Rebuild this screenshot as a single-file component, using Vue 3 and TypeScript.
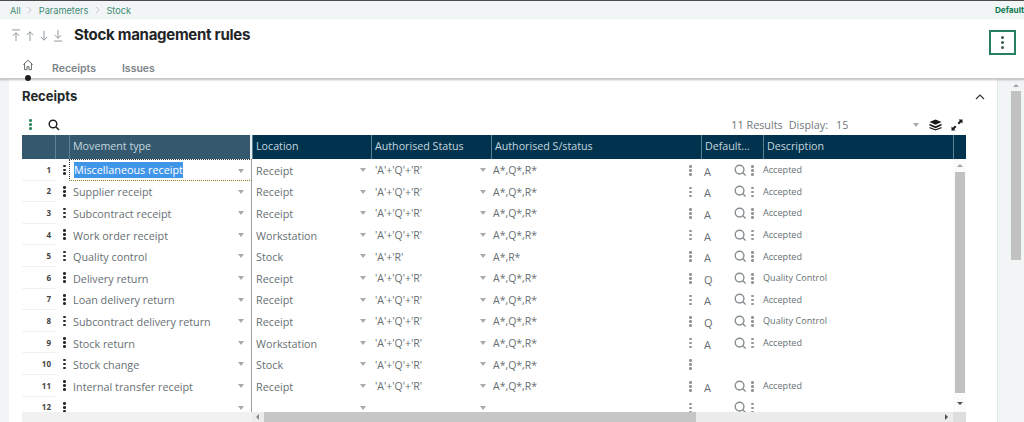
<script setup lang="ts">
interface Row {
  type: string;
  location: string;
  status: string;
  sub: string;
  def: string;
  desc: string;
}

const rows: Row[] = [
  { type: 'Miscellaneous receipt', location: 'Receipt', status: "'A'+'Q'+'R'", sub: 'A*,Q*,R*', def: 'A', desc: 'Accepted' },
  { type: 'Supplier receipt', location: 'Receipt', status: "'A'+'Q'+'R'", sub: 'A*,Q*,R*', def: 'A', desc: 'Accepted' },
  { type: 'Subcontract receipt', location: 'Receipt', status: "'A'+'Q'+'R'", sub: 'A*,Q*,R*', def: 'A', desc: 'Accepted' },
  { type: 'Work order receipt', location: 'Workstation', status: "'A'+'Q'+'R'", sub: 'A*,Q*,R*', def: 'A', desc: 'Accepted' },
  { type: 'Quality control', location: 'Stock', status: "'A'+'R'", sub: 'A*,R*', def: 'A', desc: 'Accepted' },
  { type: 'Delivery return', location: 'Receipt', status: "'A'+'Q'+'R'", sub: 'A*,Q*,R*', def: 'Q', desc: 'Quality Control' },
  { type: 'Loan delivery return', location: 'Receipt', status: "'A'+'Q'+'R'", sub: 'A*,Q*,R*', def: 'A', desc: 'Accepted' },
  { type: 'Subcontract delivery return', location: 'Receipt', status: "'A'+'Q'+'R'", sub: 'A*,Q*,R*', def: 'Q', desc: 'Quality Control' },
  { type: 'Stock return', location: 'Workstation', status: "'A'+'Q'+'R'", sub: 'A*,Q*,R*', def: 'A', desc: 'Accepted' },
  { type: 'Stock change', location: 'Stock', status: "'A'+'Q'+'R'", sub: 'A*,Q*,R*', def: '', desc: '' },
  { type: 'Internal transfer receipt', location: 'Receipt', status: "'A'+'Q'+'R'", sub: 'A*,Q*,R*', def: 'A', desc: 'Accepted' },
  { type: '', location: '', status: '', sub: '', def: '', desc: '' },
];
</script>

<template>
  <div class="page">
    <div class="crumbs">
      <span>All</span>
      <svg class="chev" viewBox="0 0 6 10"><path d="M1 1l4 4-4 4" /></svg>
      <span>Parameters</span>
      <svg class="chev" viewBox="0 0 6 10"><path d="M1 1l4 4-4 4" /></svg>
      <span>Stock</span>
      <b class="folder">Default</b>
    </div>

    <header class="head">
      <div class="title-row">
        <div class="nav-arrows">
          <svg viewBox="0 0 12 14"><path d="M1.5 1h9M6 13V4M2.5 7.5L6 4l3.5 3.5" /></svg>
          <svg viewBox="0 0 12 14"><path d="M6 13V3M2.5 6.5L6 3l3.5 3.5" /></svg>
          <svg viewBox="0 0 12 14"><path d="M6 2v10M2.5 8.5L6 12l3.5-3.5" /></svg>
          <svg viewBox="0 0 12 14"><path d="M1.5 13h9M6 1v9M2.5 6.5L6 10l3.5-3.5" /></svg>
        </div>
        <h1>Stock management rules</h1>
        <button class="more"><i></i><i></i><i></i></button>
      </div>
      <nav class="tabs">
        <span class="home">
          <svg viewBox="0 0 14 14"><path d="M1.5 6.5L7 1.5l5.5 5M3 5.5V12.5h2.800V9h2.400v3.500H11V5.500" /></svg>
          <em></em>
        </span>
        <span class="tab">Receipts</span>
        <span class="tab">Issues</span>
      </nav>
    </header>

    <div class="body">
      <main class="content">
        <section class="card">
          <div class="card-head">
            <h2>Receipts</h2>
            <svg class="collapse" viewBox="0 0 10 6"><path d="M1 5l4-4 4 4" /></svg>
          </div>

          <div class="toolbar">
            <span class="dots green"><i></i><i></i><i></i></span>
            <svg class="search-black" viewBox="0 0 12 12"><circle cx="5" cy="5" r="3.8" /><path d="M8 8l3 3" /></svg>
            <span class="results">11 Results</span>
            <span class="display">Display:</span>
            <span class="count">15</span>
            <span class="caret count-caret"></span>
            <svg class="layers" viewBox="0 0 14 12"><path d="M7 0l6.500 2.800L7 5.800.5 2.800zM.5 4.600L7 7.400l6.500-2.800v1.900L7 9.400.5 6.500zM.5 8.100L7 10.700l6.500-2.600V9.500L7 12 .5 9.500z" /></svg>
            <svg class="expand" viewBox="0 0 12 12"><path d="M7.500.5h4v4L10.200 3.200 8 5.400 6.600 4 8.800 1.800zM4.500 11.500H.5v-4l1.300 1.300L4 6.600 5.400 8 3.200 10.200z" /></svg>
          </div>

          <div class="grid">
            <div class="cols head-row">
              <div class="hcell frozen"></div>
              <div class="hcell frozen"></div>
              <div class="hcell frozen end">Movement type</div>
              <div class="hcell">Location</div>
              <div class="hcell">Authorised Status</div>
              <div class="hcell">Authorised S/status</div>
              <div class="hcell">Default...</div>
              <div class="hcell">Description</div>
              <div class="hcell"></div>
            </div>

            <div class="grid-body">
              <div class="rows">
                <div v-for="(row, i) in rows" :key="i" class="cols row">
                  <div class="num">{{ i + 1 }}</div>
                  <div class="actions"><span class="dots"><i></i><i></i><i></i></span></div>
                  <div class="cell type" :class="{ focused: i === 0 }">
                    <span :class="{ selected: i === 0 }">{{ row.type }}</span>
                    <span class="caret"></span>
                  </div>
                  <div class="cell loc">{{ row.location }}<span class="caret"></span></div>
                  <div class="cell stat">{{ row.status }}<span class="caret"></span></div>
                  <div class="cell sub">{{ row.sub }}<span class="dots light"><i></i><i></i><i></i></span></div>
                  <div class="cell def">
                    <span class="letter">{{ row.def }}</span>
                    <template v-if="i !== 9">
                      <svg class="lookup" viewBox="0 0 14 14"><circle cx="6" cy="6" r="4.7" /><path d="M9.500 9.500L12.500 12.500" /></svg>
                      <span class="dots light"><i></i><i></i><i></i></span>
                    </template>
                  </div>
                  <div class="cell desc">{{ row.desc }}</div>
                </div>
              </div>
              <div class="vbar">
                <span class="tri up"></span>
                <span class="thumb"></span>
                <span class="tri down"></span>
              </div>
            </div>

            <div class="hbar">
              <div class="hbar-frozen"></div>
              <div class="hbar-track">
                <span class="tri left"></span>
                <span class="hthumb"></span>
                <span class="tri right"></span>
              </div>
              <div class="hbar-corner"></div>
            </div>
          </div>
        </section>
      </main>

      <aside class="page-bar">
        <span class="tri up"></span>
        <span class="page-thumb"></span>
      </aside>
    </div>
  </div>
</template>

<style>
html,
body {
  margin: 0;
  overflow: hidden;
}
</style>

<style scoped>
.page {
  width: 1024px;
  height: 422px;
  overflow: hidden;
  display: flex;
  flex-direction: column;
  background: #fff;
  border-top: 1px solid #4a4a4a;
  box-sizing: border-box;
  font-family: "Open Sans", sans-serif;
  color: #5f6a70;
}

.crumbs {
  height: 18px;
  flex: none;
  display: flex;
  align-items: center;
  padding-left: 10px;
  background: #f2f5f6;
  font-size: 9.2px;
  color: #3e8c74;
  font-family: "Inter", sans-serif;
}

.chev {
  width: 5px;
  height: 8px;
  margin: 0 6.5px;
  fill: none;
  stroke: #b5bcc0;
  stroke-width: 1;
}

.folder {
  margin-left: auto;
  color: #0e7a4f;
  font-size: 8.2px;
  font-weight: 700;
}

.head {
  height: 60px;
  flex: none;
  position: relative;
  z-index: 2;
  background: #fff;
  border-bottom: 1px solid #c8c8c8;
  box-shadow: 0 1px 2px rgba(0, 0, 0, 0.25);
  box-sizing: border-box;
}

.title-row {
  height: 30px;
  margin-bottom: 6px;
  display: flex;
  align-items: center;
  padding: 0 8px 0 10px;
}

.nav-arrows {
  width: 64px;
  display: flex;
  gap: 2px;
  padding-top: 2px;
  box-sizing: border-box;
}

.nav-arrows svg {
  width: 12px;
  height: 13px;
  fill: none;
  stroke: #8a9397;
  stroke-width: 1;
}

h1 {
  margin: 0;
  font-family: "Inter", sans-serif;
  font-size: 15px;
  font-weight: 700;
  color: #1f2426;
  letter-spacing: -0.28px;
}

.more {
  margin: 16px 0 0 auto;
  width: 27px;
  height: 25px;
  flex: none;
  padding: 0;
  background: #fff;
  border: 2px solid #25805f;
  display: flex;
  flex-direction: column;
  align-items: center;
  justify-content: center;
  gap: 2px;
}

.more i {
  width: 3px;
  height: 3px;
  border-radius: 50%;
  background: #3d5a50;
}

.tabs {
  display: flex;
  align-items: flex-start;
  padding-left: 21px;
  height: 24px;
}

.home {
  width: 13px;
  display: flex;
  flex-direction: column;
  align-items: center;
  gap: 4px;
  margin-top: 4px;
}

.home svg {
  width: 12px;
  height: 12px;
  fill: none;
  stroke: #4a4f52;
  stroke-width: 1;
}

.home em {
  width: 6px;
  height: 6px;
  border-radius: 50%;
  background: #1d1d1d;
}

.tab {
  margin-left: 18px;
  margin-top: 7px;
  font-family: "Inter", sans-serif;
  font-size: 10.5px;
  font-weight: 600;
  color: #7d8488;
}

.tab + .tab {
  margin-left: 26px;
}

.body {
  flex: 1;
  min-height: 0;
  display: flex;
  background: #f2f5f6;
}

.content {
  flex: 1;
  min-width: 0;
  padding-left: 9px;
}

.card {
  width: 988px;
  height: 100%;
  background: #fff;
  padding-left: 13px;
  box-sizing: border-box;
}

.card-head {
  height: 33px;
  display: flex;
  align-items: center;
  padding-right: 12px;
}

h2 {
  margin: 0;
  font-family: "Inter", sans-serif;
  font-size: 13px;
  font-weight: 700;
  color: #23282a;
}

.collapse {
  margin: 2px 0 0 auto;
  width: 10px;
  height: 6px;
  fill: none;
  stroke: #333;
  stroke-width: 1.2;
}

.toolbar {
  width: 944px;
  height: 23px;
  padding: 2px 3px 0 0;
  box-sizing: border-box;
  display: flex;
  align-items: center;
  font-size: 10.8px;
  color: #70787c;
}

.toolbar .green {
  margin-left: 7px;
}

.search-black {
  width: 12px;
  height: 12px;
  margin-left: 16px;
  fill: none;
  stroke: #1d1d1d;
  stroke-width: 1.4;
}

.results {
  margin-left: auto;
}

.display {
  margin-left: 6px;
}

.count {
  margin-left: 8px;
  width: 77px;
}

.count-caret {
  margin-right: 10px;
}

.layers {
  width: 13px;
  height: 12px;
  fill: #1a1a1a;
}

.expand {
  width: 12px;
  height: 12px;
  margin-left: 9px;
  fill: #1a1a1a;
}

.grid {
  width: 944px;
}

.cols {
  display: grid;
  grid-template-columns: 33px 14px 183px 119px 120px 210px 62px 1fr;
}

.head-row {
  grid-template-columns: 33px 14px 183px 119px 120px 210px 62px 190px 1fr;
  height: 24px;
  background: #01334f;
  color: #c4d6de;
  font-size: 10.7px;
}

.hcell {
  display: flex;
  align-items: center;
  padding: 0 0 2px 3px;
  border-left: 1px solid #5b8397;
  box-sizing: border-box;
  white-space: nowrap;
}

.hcell:first-child {
  border-left: 0;
}

.frozen {
  background: #34596e;
}

.end {
  border-right: 2px solid #e8eef0;
}

.grid-body {
  display: flex;
  height: 253px;
  overflow: hidden;
}

.rows {
  flex: 1;
  min-width: 0;
}

.row {
  height: 21.6px;
  font-size: 10.8px;
  color: #676f73;
}

.num {
  display: flex;
  align-items: center;
  justify-content: flex-end;
  padding-right: 4px;
  font-size: 8px;
  font-weight: 700;
  color: #444;
  border-bottom: 1px solid #eef0f1;
  box-sizing: border-box;
}

.actions {
  display: flex;
  align-items: center;
  padding-left: 8px;
}

.cell {
  display: flex;
  align-items: center;
  position: relative;
  padding: 1px 0 0 4px;
  min-width: 0;
  white-space: nowrap;
  box-sizing: border-box;
}

.type {
  border-right: 1px solid #9aa0a3;
}

.type .caret {
  right: 7px;
}

.focused {
  border-top: 1px dotted #333;
  border-bottom: 1px dotted #8a7a20;
  border-left: 1px dotted #333;
  padding: 0 0 0 4px;
}

.selected {
  background: #3f95e8;
  color: #fff;
  line-height: 16px;
}

.caret {
  position: absolute;
  right: 5px;
  top: 9px;
  width: 0;
  height: 0;
  border-left: 3.5px solid transparent;
  border-right: 3.5px solid transparent;
  border-top: 4px solid #a9a9a9;
}

.count-caret {
  position: static;
}

.stat {
  font-size: 10.5px;
}

.sub {
  font-size: 10.5px;
  padding-left: 2px;
}

.sub .dots {
  position: absolute;
  right: 9px;
}

.def {
  padding-left: 3px;
}

.letter {
  width: 30px;
  padding-top: 2px;
  font-size: 11px;
}

.lookup {
  width: 13px;
  height: 13px;
  fill: none;
  stroke: #888e91;
  stroke-width: 1.5;
}

.def .dots {
  margin-left: 4px;
}

.desc {
  font-size: 9.1px;
  padding: 0;
}

.dots {
  display: inline-flex;
  flex-direction: column;
  gap: 1.4px;
}

.dots i {
  width: 2.6px;
  height: 2.6px;
  border-radius: 50%;
  background: #2b2b2b;
}

.dots.green i {
  background: #2f8a63;
}

.dots.light i {
  background: #8f9598;
}

.vbar {
  width: 13px;
  flex: none;
  display: flex;
  flex-direction: column;
  align-items: center;
  background: #fbfbfb;
  padding: 5px 0 7px;
  box-sizing: border-box;
}

.thumb {
  width: 10px;
  flex: 1;
  margin: 5px 0 9px;
  background: #c1c1c1;
}

.tri {
  width: 0;
  height: 0;
  flex: none;
}

.tri.up {
  border-left: 3px solid transparent;
  border-right: 3px solid transparent;
  border-bottom: 3px solid #a3a3a3;
}

.tri.down {
  border-left: 3px solid transparent;
  border-right: 3px solid transparent;
  border-top: 3px solid #505050;
}

.tri.left {
  border-top: 3px solid transparent;
  border-bottom: 3px solid transparent;
  border-right: 3px solid #8a8a8a;
  margin: 0 5px 0 4px;
}

.tri.right {
  border-top: 3px solid transparent;
  border-bottom: 3px solid transparent;
  border-left: 3px solid #505050;
  margin: 0 5px;
}

.hbar {
  height: 10px;
  display: flex;
}

.hbar-frozen {
  width: 230px;
  background: #f1f1f1;
}

.hbar-track {
  flex: 1;
  display: flex;
  align-items: center;
  background: #ececec;
}

.hbar-corner {
  width: 13px;
  background: #dedede;
}

.hthumb {
  width: 432px;
  height: 100%;
  margin-right: auto;
  background: #c6c6c6;
}

.page-bar {
  width: 27px;
  flex: none;
  display: flex;
  flex-direction: column;
  align-items: flex-end;
  background: #f2f5f6;
  border-left: 1px solid #e6e9ea;
  box-sizing: border-box;
}

.page-bar .up {
  margin: 5px 5px 4px 0;
}

.page-thumb {
  width: 10px;
  height: 169px;
  margin-right: 3px;
  background: #c1c1c1;
}
</style>
